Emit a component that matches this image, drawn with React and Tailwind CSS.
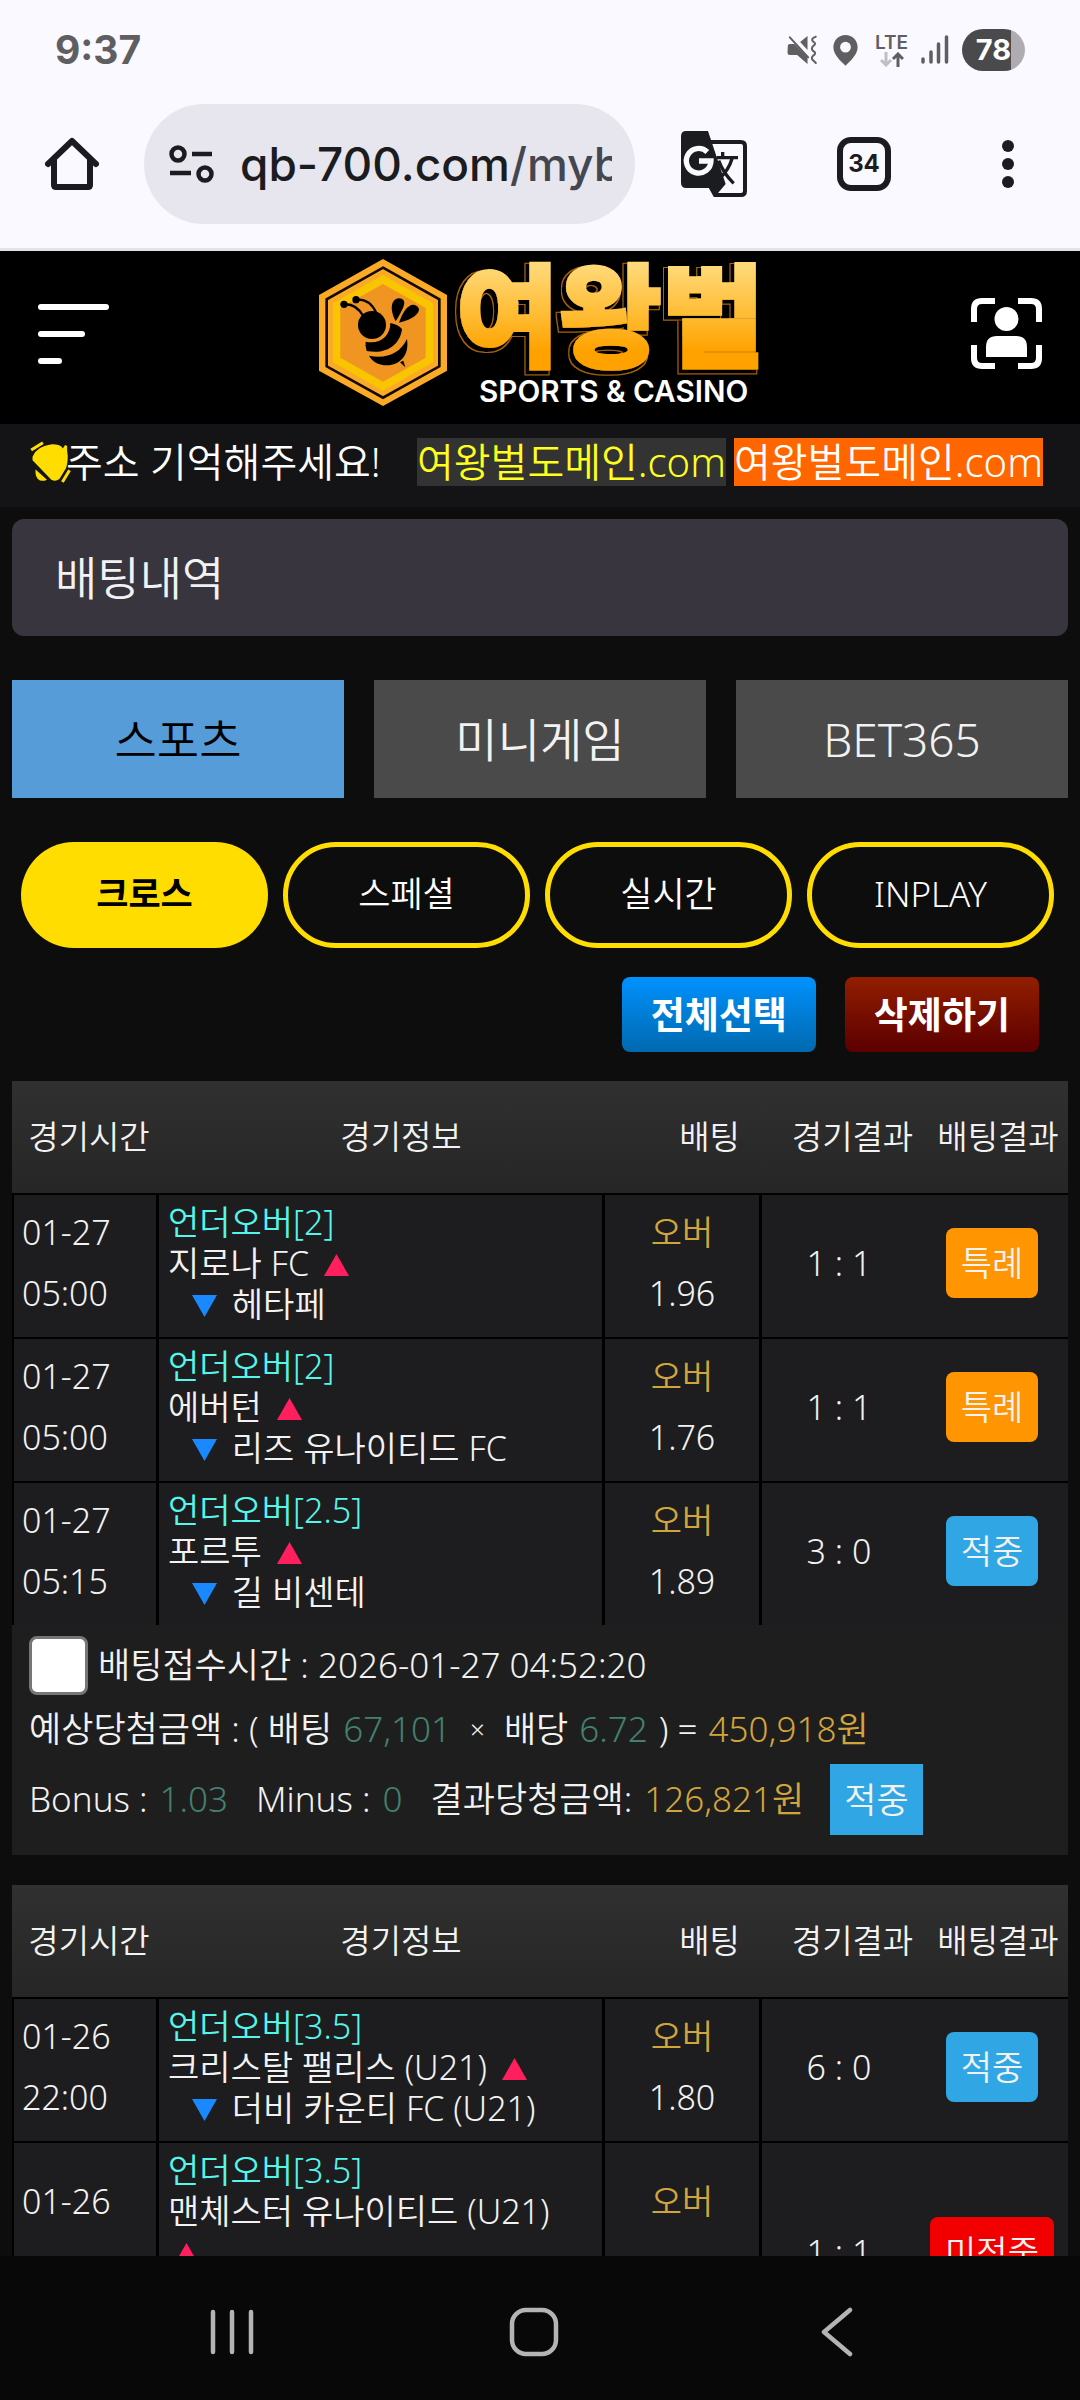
import React from "react";

const SLIPS = [
  {
    id: "slip-1",
    rows: [
      { date: "01-27", time: "05:00", market: "언더오버[2]", home: "지로나 FC", away: "헤타페", pick: "오버", odds: "1.96", score: "1 : 1", result: "특례" },
      { date: "01-27", time: "05:00", market: "언더오버[2]", home: "에버턴", away: "리즈 유나이티드 FC", pick: "오버", odds: "1.76", score: "1 : 1", result: "특례" },
      { date: "01-27", time: "05:15", market: "언더오버[2.5]", home: "포르투", away: "길 비센테", pick: "오버", odds: "1.89", score: "3 : 0", result: "적중" },
    ],
    summary: {
      placed: "2026-01-27 04:52:20",
      stake: "67,101",
      odds: "6.72",
      expected: "450,918원",
      bonus: "1.03",
      minus: "0",
      payout: "126,821원",
      result: "적중",
    },
  },
  {
    id: "slip-2",
    rows: [
      { date: "01-26", time: "22:00", market: "언더오버[3.5]", home: "크리스탈 팰리스 (U21)", away: "더비 카운티 FC (U21)", pick: "오버", odds: "1.80", score: "6 : 0", result: "적중" },
      { date: "01-26", market: "언더오버[3.5]", home: "맨체스터 유나이티드 (U21)", pick: "오버", score: "1 : 1", result: "미적중", tall: true },
    ],
  },
];

const BADGE_COLORS = {
  특례: "bg-[#ff9500]",
  적중: "bg-[#30a7e4]",
  미적중: "bg-[#f20000]",
};

function StatusBar() {
  return (
    <div className="flex h-[100px] items-center pl-[55px] pr-[55px] text-[#5f5f61]">
      <span className="flex-1 font-[Inter,sans-serif] text-[39px] font-bold leading-[40px]">9:37</span>
      <div className="flex items-center">
        <svg width="31" height="30" viewBox="80 45 92 90" fill="none" className="mr-[15px]">
          <path d="M82 77 Q82 72 88 72 H102 L141 112 V132 L110 105 H88 Q81 105 81 98Z" fill="#5f5f61" />
          <path d="M119 66 L141 48 V90Z" fill="#5f5f61" />
          <path d="M88 52 L143 112" stroke="#5f5f61" strokeWidth="6" strokeLinecap="round" />
          <path d="M166 50 Q150 56 157 64 Q170 70 158 78 Q150 86 158 93 Q170 99 158 107 Q150 115 158 121 L166 129" stroke="#5f5f61" strokeWidth="6" strokeLinecap="round" />
        </svg>
        <svg width="25" height="31" viewBox="218 43 74 92" className="mr-[17px]">
          <path fillRule="evenodd" fill="#5f5f61" d="M255 43 C235 43 219 58 219 80 C219 100 240 120 255 134 C270 120 291 100 291 80 C291 58 275 43 255 43Z M255 63 A16 16 0 1 1 255 95 A16 16 0 1 1 255 63Z" />
        </svg>
        <div className="mr-[13px] flex w-[33px] flex-col items-center">
          <span className="font-[Inter,sans-serif] text-[19px] font-semibold leading-[18px]">LTE</span>
          <svg width="24" height="15" viewBox="0 0 24 15" fill="none" strokeWidth="3">
            <path d="M6 0 V13 M1 8 L6 13 L11 8" stroke="#bfbec3" />
            <path d="M18 15 V2 M13 7 L18 2 L23 7" stroke="#5f5f61" />
          </svg>
        </div>
        <svg width="28" height="30" viewBox="0 0 28 30" stroke="#5f5f61" strokeWidth="3.500" strokeLinecap="round" className="mr-[13px]">
          <path d="M2 24 V27 M10 17 V27 M17.500 9 V27 M25.500 2 V27" />
        </svg>
        <div className="flex h-[42px] w-[63px] items-center justify-center rounded-full bg-[linear-gradient(90deg,#4a4a4c_78%,#aeacb0_78%)] font-[Inter,sans-serif] text-[29px] font-bold text-white">
          78
        </div>
      </div>
    </div>
  );
}

function BrowserBar() {
  return (
    <div className="flex h-[151px] items-center border-b-[3px] border-[#e3e3e8] pb-[24px] pl-[44px] pr-[66px] pt-[4px]">
      <button type="button" aria-label="홈" className="mr-[44px]">
        <svg width="56" height="56" viewBox="0 0 56 56" fill="none" stroke="#1b1c20" strokeWidth="6" strokeLinejoin="round" strokeLinecap="round">
          <path d="M4 28 L28 5 L52 28 M10 24 V49 Q10 51 12 51 H44 Q46 51 46 49 V24" />
        </svg>
      </button>
      <div className="flex h-[120px] min-w-0 flex-1 items-center rounded-full bg-[#e7e6ef] pl-[25px] pr-[23px]">
        <svg width="46" height="40" viewBox="0 0 46 40" fill="none" stroke="#1b1c20" strokeWidth="4.500" className="shrink-0">
          <circle cx="9" cy="10" r="6.500" />
          <path d="M23 10 H43 M1 29 H22" />
          <circle cx="36" cy="30" r="6.500" />
        </svg>
        <div className="ml-[25px] flex-1 overflow-hidden whitespace-nowrap font-[Inter,sans-serif] text-[46px] font-medium leading-[60px] text-[#1b1c20]">
          qb-700.com<span className="text-[#44474f]">/myb</span>
        </div>
      </div>
      <button type="button" aria-label="번역" className="ml-[46px]">
        <svg width="66" height="66" viewBox="63 93 198 198">
          <path d="M150 126 H243 Q255 126 255 138 V273 Q255 285 243 285 H165 L152 262" fill="#faf9ff" stroke="#1b1c20" strokeWidth="12" />
          <path d="M170 173 H234 M188 156 V176 M216 176 Q206 210 178 236 M176 182 Q190 220 221 250" fill="none" stroke="#1b1c20" strokeWidth="10" />
          <path d="M63 109 Q63 93 79 93 H144 L197 252 L164 291 L153 264 H79 Q63 264 63 248Z" fill="#1b1c20" />
          <path d="M142 156 A37 37 0 1 0 153 183 H117" fill="none" stroke="#faf9ff" strokeWidth="16" />
        </svg>
      </button>
      <button type="button" aria-label="탭 34개" className="ml-[90px] flex h-[54px] w-[54px] items-center justify-center rounded-[14px] border-[6px] border-[#1b1c20] font-[Inter,sans-serif] text-[24px] font-bold text-[#1b1c20]">
        34
      </button>
      <button type="button" aria-label="메뉴" className="ml-[111px]">
        <svg width="12" height="48" viewBox="0 0 12 48" fill="#1b1c20">
          <circle cx="6" cy="6" r="6" />
          <circle cx="6" cy="24" r="6" />
          <circle cx="6" cy="42" r="6" />
        </svg>
      </button>
    </div>
  );
}

function Logo() {
  return (
    <svg width="442" height="149" viewBox="58 30 1326 447" role="img" aria-label="여왕벌 SPORTS & CASINO">
      <defs>
        <linearGradient id="gold" gradientUnits="userSpaceOnUse" x1="0" y1="50" x2="0" y2="350">
          <stop offset="0" stopColor="#ffd978" />
          <stop offset="0.5" stopColor="#ffbb32" />
          <stop offset="0.85" stopColor="#ffa200" />
        </linearGradient>
        <filter id="edge" filterUnits="userSpaceOnUse" x="440" y="20" width="960" height="380">
          <feOffset in="SourceAlpha" dx="-8" dy="9" result="moved" />
          <feMorphology in="moved" operator="dilate" radius="5" result="wide" />
          <feFlood floodColor="#a8620f" />
          <feComposite in2="wide" operator="in" result="brown" />
          <feMorphology in="moved" operator="dilate" radius="2" result="thin" />
          <feFlood floodColor="#000" />
          <feComposite in2="thin" operator="in" result="black" />
          <feMerge>
            <feMergeNode in="brown" />
            <feMergeNode in="black" />
            <feMergeNode in="SourceGraphic" />
          </feMerge>
        </filter>
      </defs>
      <polygon points="250,30 442,138 442,365 250,471 58,365 58,138" fill="#fbaa26" />
      <polygon points="250,56 419,151 419,352 250,446 81,352 81,151" fill="none" stroke="#120a00" strokeWidth="8" />
      <polygon points="250,78 400,163 400,340 250,425 100,340 100,163" fill="#f9c400" />
      <polygon points="250,105 378,177 378,326 250,398 122,326 122,177" fill="#f09522" />
      <circle cx="133" cy="166" r="11" />
      <circle cx="169" cy="152" r="11" />
      <path d="M133 166 Q168 163 190 200 M169 152 Q210 148 229 190" fill="none" stroke="#000" strokeWidth="7" />
      <circle cx="217" cy="228" r="42" />
      <path d="M288 217 C268 180 275 150 297 148 C326 150 314 175 288 217Z" />
      <path d="M298 221 C308 190 325 165 343 167 C374 176 355 208 298 221Z" />
      <path d="M272 222 C288 225 300 232 307 240 C302 285 262 318 201 306 Q196 290 198 278 C240 287 272 262 272 222Z" />
      <path d="M322 270 C330 320 300 348 262 349 C235 349 215 335 208 320 C260 330 300 315 322 270Z" />
      <path d="M301 340 L311 335 L317 355Z" />
      <text x="470" y="328" filter="url(#edge)" fill="url(#gold)" stroke="url(#gold)" strokeWidth="10" fontFamily="'Noto Sans CJK KR', sans-serif" fontWeight="900" fontSize="335">여왕벌</text>
      <text x="538" y="459" fill="#fff" fontFamily="Inter, sans-serif" fontWeight="600" fontSize="89">SPORTS &amp; CASINO</text>
    </svg>
  );
}

function SiteHeader() {
  return (
    <header className="flex h-[173px] items-center justify-between bg-black pb-[8px] pl-[38px] pr-[38px]">
      <button type="button" aria-label="메뉴 열기" className="flex w-[71px] flex-col gap-[21px]">
        <span className="h-[6px] w-[71px] rounded-full bg-white" />
        <span className="h-[6px] w-[47px] rounded-full bg-white" />
        <span className="h-[6px] w-[24px] rounded-full bg-white" />
      </button>
      <a href="#home">
        <Logo />
      </a>
      <button type="button" aria-label="내 정보">
        <svg width="71" height="71" viewBox="0 0 71 71" fill="none">
          <path d="M3 24 V11 Q3 3 11 3 H24 M47 3 H60 Q68 3 68 11 V24 M68 47 V60 Q68 68 60 68 H47 M24 68 H11 Q3 68 3 60 V47" stroke="#fff" strokeWidth="6" />
          <circle cx="35.500" cy="21" r="12" fill="#fff" />
          <path d="M15 59 V49 Q15 38 26 38 H45 Q56 38 56 49 V59Z" fill="#fff" />
        </svg>
      </button>
    </header>
  );
}

function Notice() {
  return (
    <div className="flex h-[83px] items-center whitespace-nowrap bg-[#141416] pb-[8px] pl-[30px] text-[40px] leading-[48px] text-white">
      <svg width="41" height="42" viewBox="85 575 121 125" fill="#ffdd00" className="mr-[-5px] shrink-0">
        <path d="M92 622 Q105 590 150 585 Q176 585 182 597 L189 587 L195 590 V605 Q200 630 192 655 L172 688 Q160 697 148 690 L92 632Z" />
        <path d="M101 660 L135 690 Q118 698 108 688 Q99 678 101 660Z" />
        <path d="M88 602 L123 580 M181 697 L202 662" stroke="#ffdd00" strokeWidth="9" />
      </svg>
      <span className="w-[351px]">주소 기억해주세요!</span>
      <a href="#domain-1" className="mr-[8px] bg-[#333333] text-[#ffff1e]">여왕벌도메인.com</a>
      <a href="#domain-2" className="bg-[#ff6600]">여왕벌도메인.com</a>
    </div>
  );
}

function Badge({ label }) {
  return (
    <span className={`inline-block rounded-[8px] px-[15px] leading-[70px] ${BADGE_COLORS[label]}`}>{label}</span>
  );
}

function MatchRow({ row }) {
  const half = row.tall ? "h-[102px] leading-[102px]" : "h-[61px] leading-[61px]";
  const cell = "border-l-[3px] border-t-2 border-black";
  return (
    <tr className="bg-[#1d1d1f]">
      <td className="border-l-2 border-t-2 border-black pb-[13px] pl-[8px] pt-[7px] align-top">
        <div className={half}>{row.date}</div>
        <div className={half}>{row.time}</div>
      </td>
      <td className={`${cell} pl-[9px] pr-[24px] pt-[7px] align-top leading-[41px]`}>
        <div className="text-[#55f6ea]">{row.market}</div>
        <div>
          {row.home}{" "}
          <svg width="25" height="22" viewBox="0 0 25 22" className="ml-[6px] inline-block align-baseline" aria-label="상">
            <path d="M12.500 0 L25 22 H0Z" fill="#ff1f5f" />
          </svg>
        </div>
        {row.away && (
          <div className="pl-[24px]">
            <svg width="25" height="22" viewBox="0 0 25 22" className="mr-[6px] inline-block align-baseline" aria-label="하">
              <path d="M0 0 H25 L12.500 22Z" fill="#1a88ff" />
            </svg>{" "}
            {row.away}
          </div>
        )}
      </td>
      <td className={`${cell} pt-[7px] text-center align-top`}>
        <div className={`text-[#d2a53c] ${half}`}>{row.pick}</div>
        <div className={half}>{row.odds}</div>
      </td>
      <td className={`${cell} pb-[6px] text-center align-middle`}>{row.score}</td>
      <td className="border-t-2 border-black pb-[6px] text-center align-middle">
        <Badge label={row.result} />
      </td>
    </tr>
  );
}

function Summary({ id, data }) {
  const green = "text-[#42806f]";
  const gold = "text-[#d2a53c]";
  return (
    <div className="flex flex-col bg-[#1e1e1e] pb-[20px] pl-[17px] pt-[10px] text-[35px]">
      <label htmlFor={id} className="flex h-[60px] items-center gap-[10px]">
        <input id={id} type="checkbox" className="h-[59px] w-[59px] appearance-none rounded-[8px] border-[3px] border-[#767676] bg-white" />
        배팅접수시간 : {data.placed}
      </label>
      <p className="flex h-[69px] items-center gap-[11px]">
        <span>예상당첨금액 : ( 배팅</span>
        <span className={green}>{data.stake}</span>
        <span className="px-[8px] text-[26px]">×</span>
        <span>배당</span>
        <span className={green}>{data.odds}</span>
        <span>) =</span>
        <span className={gold}>{data.expected}</span>
      </p>
      <p className="flex h-[71px] items-center gap-[12px]">
        <span>Bonus :</span>
        <span className={`mr-[16px] ${green}`}>{data.bonus}</span>
        <span>Minus :</span>
        <span className={`mr-[16px] ${green}`}>{data.minus}</span>
        <span>결과당청금액:</span>
        <span className={gold}>{data.payout}</span>
        <span className="ml-[14px] bg-[#30a7e4] px-[14px] leading-[71px]">{data.result}</span>
      </p>
    </div>
  );
}

function Slip({ slip }) {
  return (
    <section className="mb-[30px]">
      <table className="w-full table-fixed border-separate border-spacing-0">
        <colgroup>
          <col className="w-[144px]" />
          <col />
          <col className="w-[157px]" />
          <col className="w-[157px]" />
          <col className="w-[152px]" />
        </colgroup>
        <thead>
          <tr className="h-[112px] whitespace-nowrap bg-linear-to-b from-[#303030] to-[#262626] text-[33px]">
            <th className="pl-[10px] font-[350]">경기시간</th>
            <th className="pl-[44px] font-[350]">경기정보</th>
            <th className="pl-[58px] font-[350]">배팅</th>
            <th className="pl-[30px] font-[350]">경기결과</th>
            <th className="pl-[12px] font-[350]">배팅결과</th>
          </tr>
        </thead>
        <tbody>
          {slip.rows.map((row, i) => (
            <MatchRow key={i} row={row} />
          ))}
        </tbody>
      </table>
      {slip.summary && <Summary id={slip.id} data={slip.summary} />}
    </section>
  );
}

function BetHistory() {
  return (
    <main className="px-[12px] pt-[12px]">
      <h1 className="rounded-[12px] bg-[#38353f] pl-[43px] text-[46px] font-[350] leading-[117px]">배팅내역</h1>
      <nav className="mt-[44px] grid grid-cols-3 gap-[30px] text-center text-[46px] leading-[118px]">
        <a href="#sports" className="bg-[#569cd8] text-black">스포츠</a>
        <a href="#mini" className="bg-[#4a4a4a]">미니게임</a>
        <a href="#bet365" className="bg-[#4a4a4a]">BET365</a>
      </nav>
      <div className="mt-[44px] grid grid-cols-4 gap-[15px] pl-[9px] pr-[14px] text-[35px] leading-[40px]">
        <button type="button" className="h-[106px] rounded-full bg-[#ffdd00] pb-[3px] font-semibold text-black">크로스</button>
        <button type="button" className="h-[106px] rounded-full border-[5px] border-[#ffdd00] pb-[3px] text-white">스페셜</button>
        <button type="button" className="h-[106px] rounded-full border-[5px] border-[#ffdd00] pb-[3px] text-white">실시간</button>
        <button type="button" className="h-[106px] rounded-full border-[5px] border-[#ffdd00] pb-[3px] text-white">INPLAY</button>
      </div>
      <div className="mb-[29px] mt-[29px] flex justify-end gap-[29px] pr-[29px] text-[37px] font-semibold text-white [text-shadow:0_-2px_1px_rgba(0,0,0,0.4)]">
        <button type="button" className="h-[75px] rounded-[8px] bg-linear-to-b from-[#0092ff] to-[#0069af] px-[29px]">전체선택</button>
        <button type="button" className="h-[75px] rounded-[8px] bg-linear-to-b from-[#921e00] to-[#5c0000] px-[29px]">삭제하기</button>
      </div>
      <div className="text-[34px]">
        {SLIPS.map((slip) => (
          <Slip key={slip.id} slip={slip} />
        ))}
      </div>
    </main>
  );
}

function SystemNav() {
  return (
    <nav className="flex h-[144px] shrink-0 items-center justify-between bg-[#080808] pl-[210px] pr-[227px] pt-[8px]">
      <button type="button" aria-label="최근 앱">
        <svg width="44" height="46" viewBox="0 0 44 46" stroke="#b4b4b4" strokeWidth="4.500" strokeLinecap="round">
          <path d="M3 3 V43 M22 3 V43 M41 3 V43" />
        </svg>
      </button>
      <button type="button" aria-label="홈 화면" className="mr-[6px]">
        <svg width="50" height="50" viewBox="0 0 50 50" fill="none" stroke="#b4b4b4" strokeWidth="4.500">
          <rect x="3" y="3" width="44" height="44" rx="14" />
        </svg>
      </button>
      <button type="button" aria-label="뒤로">
        <svg width="33" height="50" viewBox="0 0 33 50" fill="none" stroke="#b4b4b4" strokeWidth="4.500" strokeLinecap="round" strokeLinejoin="round">
          <path d="M30 3 L4 25 L30 47" />
        </svg>
      </button>
    </nav>
  );
}

export default function App() {
  return (
    <div className="flex h-screen flex-col overflow-hidden bg-[#0d0d0d] font-['Noto_Sans','Noto_Sans_CJK_KR',sans-serif] font-[350] text-[#f2f2f2]">
      <div className="shrink-0 bg-[#faf9ff]">
        <StatusBar />
        <BrowserBar />
      </div>
      <div className="min-h-0 flex-1 overflow-hidden">
        <SiteHeader />
        <Notice />
        <BetHistory />
      </div>
      <SystemNav />
    </div>
  );
}
